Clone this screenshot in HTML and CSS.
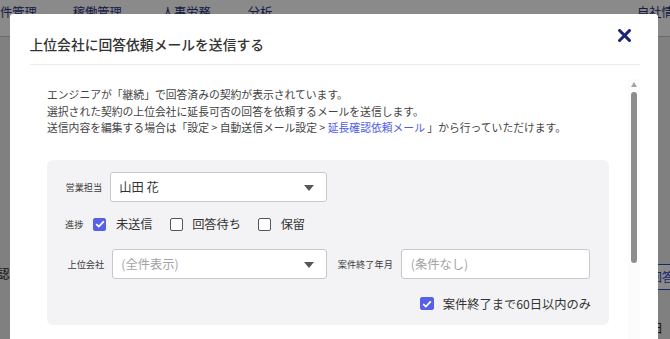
FILE: index.html
```html
<!DOCTYPE html>
<html lang="ja">
<head>
<meta charset="utf-8">
<title>上位会社に回答依頼メールを送信する</title>
<link rel="stylesheet" href="styles.css">
</head>
<body>
<div class="page">
  <header class="nav">
    <span class="nav-item n1">件管理</span>
    <span class="nav-item n2">稼働管理</span>
    <span class="nav-item n3">人事労務</span>
    <span class="nav-item n4">分析</span>
    <span class="nav-item n5">自社情報</span>
  </header>
  <main class="page-main">
    <div class="bg-row">
      <span class="bg-text bg-left">確認中</span>
      <span class="bg-btn">回答を依頼</span>
    </div>
    <div class="bg-row bg-row2">
      <span class="bg-text bg-day">日</span>
    </div>
  </main>
</div>
<div class="overlay"></div>
<div class="modal">
  <div class="modal-header">
    <h1 class="modal-title">上位会社に回答依頼メールを送信する</h1>
    <button class="close" type="button" aria-label="閉じる">
      <svg width="13" height="13" viewBox="0 0 13 13"><path d="M1.6 1.6 L11.4 11.4 M11.4 1.6 L1.6 11.4" stroke="#1d247a" stroke-width="3" stroke-linecap="square" fill="none"/></svg>
    </button>
  </div>
  <div class="divider"></div>
  <div class="modal-body">
    <div class="body-content">
      <p class="desc">エンジニアが「継続」で回答済みの契約が表示されています。<br>選択された契約の上位会社に延長可否の回答を依頼するメールを送信します。<br>送信内容を編集する場合は「設定 &gt; 自動送信メール設定 &gt; <a class="link">延長確認依頼メール</a> 」から行っていただけます。</p>
      <div class="filter">
        <div class="row row1">
          <span class="label l1">営業担当</span>
          <div class="select sel1">
            <span class="value">山田 花</span>
            <svg class="caret" width="10" height="6" viewBox="0 0 10 6"><path d="M0 0 H10 L5 6 Z" fill="#575757"/></svg>
          </div>
        </div>
        <div class="row row2">
          <span class="label l2">進捗</span>
          <span class="cb checked"><svg width="10" height="8" viewBox="0 0 10 8"><path d="M1.2 4.2 L3.8 6.6 L8.8 1.4" stroke="#fff" stroke-width="1.8" fill="none"/></svg></span>
          <span class="cb-text">未送信</span>
          <span class="cb"></span>
          <span class="cb-text">回答待ち</span>
          <span class="cb"></span>
          <span class="cb-text">保留</span>
        </div>
        <div class="row row3">
          <span class="label l3">上位会社</span>
          <div class="select sel2">
            <span class="placeholder">(全件表示)</span>
            <svg class="caret" width="10" height="6" viewBox="0 0 10 6"><path d="M0 0 H10 L5 6 Z" fill="#575757"/></svg>
          </div>
          <span class="label l4">案件終了年月</span>
          <div class="select inp">
            <span class="placeholder">(条件なし)</span>
          </div>
        </div>
        <div class="row row4">
          <span class="cb checked big"><svg width="10" height="8" viewBox="0 0 10 8"><path d="M1.2 4.2 L3.8 6.6 L8.8 1.4" stroke="#fff" stroke-width="1.8" fill="none"/></svg></span>
          <span class="cb-text">案件終了まで60日以内のみ</span>
        </div>
      </div>
    </div>
    <div class="scrollbar">
      <span class="scroll-up"></span>
      <span class="scroll-thumb"></span>
    </div>
  </div>
</div>
</body>
</html>
```
FILE: styles.css
```css
* { box-sizing: border-box; }
html, body {
  margin: 0;
  padding: 0;
  width: 670px;
  height: 339px;
  overflow: hidden;
}
body {
  font-family: "Noto Sans CJK JP", "Noto Sans", sans-serif;
  position: relative;
  background: #ececec;
}
.page {
  width: 670px;
  height: 339px;
}
.nav {
  height: 37px;
  background: #fff;
  border-bottom: 1px solid #c4c4c4;
  display: flex;
  align-items: flex-start;
  padding-top: 4px;
  white-space: nowrap;
  overflow: hidden;
}
.nav-item {
  font-size: 12.25px;
  line-height: 17px;
  color: #2a3180;
}
.n2 { margin-left: 36px; }
.n3 { margin-left: 40px; }
.n4 { margin-left: 37px; }
.n5 { margin-left: auto; margin-right: -16px; }
.page-main {
  padding-top: 227px;
}
.bg-row {
  display: flex;
  justify-content: space-between;
  align-items: flex-start;
  white-space: nowrap;
}
.bg-text {
  font-size: 12.25px;
  line-height: 17px;
  color: #2b2b2b;
}
.bg-left { margin-left: -15px; margin-top: 2px; }
.bg-btn {
  font-size: 12.25px;
  line-height: 24px;
  color: #3346c8;
  border: 1px solid #3346c8;
  border-radius: 3px;
  padding: 0 8px;
  margin-right: -50px;
  background: #fff;
}
.bg-row2 { margin-top: 30px; justify-content: flex-end; }
.bg-day { margin-right: 7px; }
.overlay {
  position: absolute;
  left: 0;
  top: 0;
  width: 670px;
  height: 339px;
  background: rgba(0, 0, 0, 0.46);
}
.modal {
  position: absolute;
  left: 10px;
  top: 14px;
  width: 648px;
  height: 340px;
  background: #fff;
  border-radius: 3px 3px 0 0;
  overflow: hidden;
}
.modal-header {
  display: flex;
  justify-content: space-between;
  align-items: flex-start;
  height: 50px;
  padding: 19.5px 27px 0 19.5px;
}
.modal-title {
  margin: 0;
  font-size: 13.8px;
  line-height: 20px;
  font-weight: 500;
  color: #333;
}
.close {
  border: 0;
  padding: 0;
  margin-top: -4.5px;
  background: none;
  width: 13px;
  height: 13px;
  display: block;
}
.close svg { display: block; }
.divider {
  height: 1px;
  margin: 0 18px 0 20px;
  background: #ececec;
}
.modal-body {
  display: flex;
  margin: 14px 18px 0 20px;
  height: 270px;
}
.body-content {
  flex: 1;
  padding: 7px 19px 0 17px;
}
.desc {
  margin: 0;
  font-size: 10.8px;
  line-height: 16.7px;
  color: #444;
  white-space: nowrap;
}
.link { color: #4f5ee6; text-decoration: none; }
.filter {
  margin-top: 23.9px;
  background: #f3f3f6;
  border-radius: 6px;
  padding: 12px 18px 14.7px 18px;
}
.row {
  display: flex;
  align-items: center;
}
.label {
  font-size: 9.2px;
  line-height: 14px;
  color: #3a3a3a;
  white-space: nowrap;
}
.l1 { margin-left: 0.5px; margin-right: 7.5px; }
.l2 { margin-right: 10px; }
.l3 { margin-left: 2.5px; margin-right: 7.5px; }
.l4 { margin-left: 10.3px; margin-right: 8.5px; }
.select {
  height: 30px;
  background: #fff;
  border: 1px solid #c8c8cc;
  border-radius: 3px;
  display: flex;
  align-items: center;
  justify-content: space-between;
  padding: 0 12px 0 8.5px;
  font-size: 12.25px;
}
.sel1 { width: 217.7px; }
.sel2 { width: 215.7px; }
.inp { width: 189px; }
.value { color: #333; }
.placeholder { color: #a3a3a3; }
.caret { display: block; margin-top: 1px; }
.row2 {
  margin-top: 15px;
  height: 14px;
}
.cb {
  width: 13px;
  height: 13px;
  border: 1.5px solid #555;
  border-radius: 2px;
  background: #fff;
  display: flex;
  align-items: center;
  justify-content: center;
  flex-shrink: 0;
}
.cb.checked {
  background: #5661e6;
  border-color: #5661e6;
}
.cb.big { width: 13.7px; height: 13.7px; }
.cb svg { display: block; }
.cb-text {
  font-size: 12.25px;
  line-height: 14px;
  color: #333;
  margin-left: 9.5px;
  margin-right: 17px;
  white-space: nowrap;
}
.row3 { margin-top: 18px; }
.row4 {
  margin-top: 17.5px;
  height: 14.3px;
  justify-content: flex-end;
}
.row4 .cb-text { margin-right: 0; margin-left: 9px; }
.scrollbar {
  width: 12px;
  display: flex;
  flex-direction: column;
  align-items: center;
  background: #fcfcfc;
}
.scroll-up {
  margin-top: 3px;
  width: 0;
  height: 0;
  border-left: 3.5px solid transparent;
  border-right: 3.5px solid transparent;
  border-bottom: 5px solid #a2a2a2;
}
.scroll-thumb {
  margin-top: 5px;
  width: 6px;
  height: 171px;
  border-radius: 3px;
  background: #8d8d8d;
}
```
